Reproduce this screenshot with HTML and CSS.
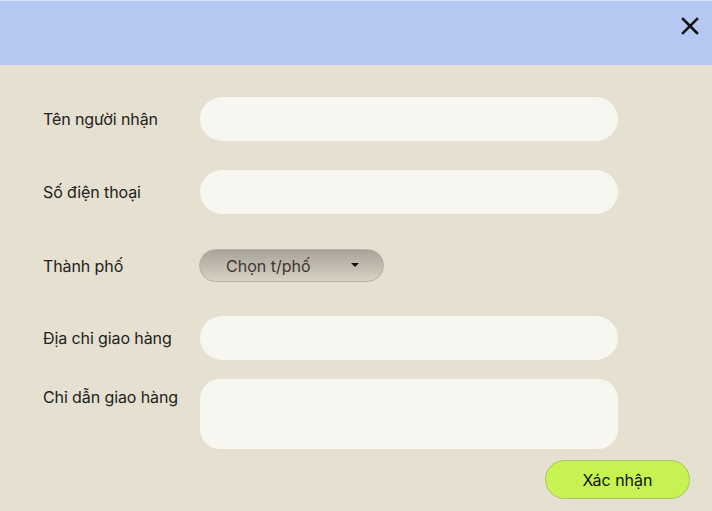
FILE: index.html
```html
<!DOCTYPE html>
<html lang="vi">
<head>
<meta charset="utf-8">
<link rel="stylesheet" href="styles.css">
</head>
<body>
<div class="dialog">
  <header class="head">
    <button class="close" aria-label="Đóng">
      <svg width="18" height="18" viewBox="0 0 18 18"><path d="M2 2 L16 16 M16 2 L2 16" stroke="#111" stroke-width="2.6" stroke-linecap="square"/></svg>
    </button>
  </header>
  <form class="form">
    <div class="row r1">
      <label class="label">Tên người nhận</label>
      <div class="input wide"></div>
    </div>
    <div class="row r2">
      <label class="label">Số điện thoại</label>
      <div class="input wide"></div>
    </div>
    <div class="row r3">
      <label class="label">Thành phố</label>
      <div class="select"><span>Chọn t/phố</span><span class="caret"></span></div>
    </div>
    <div class="row r4">
      <label class="label">Địa chỉ giao hàng</label>
      <div class="input wide"></div>
    </div>
    <div class="row r5 top">
      <label class="label">Chỉ dẫn giao hàng</label>
      <div class="input wide area"></div>
    </div>
    <div class="actions">
      <button type="button" class="submit">Xác nhận</button>
    </div>
  </form>
</div>
</body>
</html>
```
FILE: styles.css
```css
* { box-sizing: border-box; }
html, body { margin: 0; padding: 0; }
body {
  width: 712px;
  height: 511px;
  background: #e5e0cf;
  font-family: Inter, "Noto Sans", sans-serif;
  color: #1c1c1c;
  overflow: hidden;
}
.dialog { display: flex; flex-direction: column; }
.head {
  height: 65px;
  background: #b5c9f3;
  border-top: 1px solid #d6dff2;
  display: flex;
  justify-content: flex-end;
  align-items: flex-start;
  padding: 16px 13px 0 0;
}
.close {
  border: 0;
  background: transparent;
  padding: 0;
  width: 18px;
  height: 18px;
  display: block;
}
.close svg { display: block; }
.form {
  display: flex;
  flex-direction: column;
  padding: 32px 0 0 43px;
}
.row {
  display: grid;
  grid-template-columns: 157px auto;
  align-items: center;
}
.row.top { align-items: start; }
.label {
  font-size: 16px;
  letter-spacing: -0.1px;
  color: #222;
}
.row.top .label { padding-top: 8px; }
.input {
  height: 44px;
  background: #f7f6f1;
  border-radius: 22px;
}
.wide { width: 418px; }
.area { height: 70px; border-radius: 20px; }
.r2 { margin-top: 29px; }
.r3 { margin-top: 35px; }
.r4 { margin-top: 34px; }
.r5 { margin-top: 19px; }
.select {
  margin-left: -1px;
  width: 185px;
  height: 33px;
  border-radius: 17px;
  border: 1px solid #b7b1a2;
  background: linear-gradient(#a8a299, #d8d2c3);
  display: flex;
  align-items: center;
  justify-content: space-between;
  padding: 0 24px 0 26px;
  font-size: 16px;
  color: #3b3631;
}
.caret {
  width: 0;
  height: 0;
  border-left: 4px solid transparent;
  border-right: 4px solid transparent;
  border-top: 4px solid #111;
  margin-top: -2px;
}
.actions {
  display: flex;
  justify-content: flex-end;
  padding-right: 22px;
  margin-top: 11px;
}
.submit {
  width: 145px;
  height: 39px;
  border-radius: 20px;
  border: 1px solid #a9c26a;
  background: #c6f351;
  font-family: Inter, "Noto Sans", sans-serif;
  font-size: 16px;
  color: #111;
}
```
